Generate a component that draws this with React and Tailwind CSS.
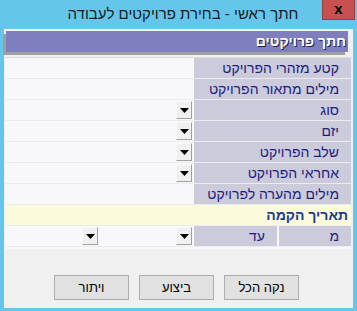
import React from "react";

const rows = [
  { label: "קטע מזהרי הפרויקט", dd: false },
  { label: "מילים מתאור הפרויקט", dd: false },
  { label: "סוג", dd: true },
  { label: "יזם", dd: true },
  { label: "שלב הפרויקט", dd: true },
  { label: "אחראי הפרויקט", dd: true },
  { label: "מילים מהערה לפרויקט", dd: false },
];

const DropBtn = () => (
  <div className="w-[16px] h-[18px] bg-[#f0f0f0] border border-[#f8f8f8] border-r-[#a0a0a0] border-b-[#a0a0a0] flex items-center justify-center">
    <svg width="9" height="5" viewBox="0 0 9 5">
      <path d="M0 0h9L4.5 5z" fill="#000" />
    </svg>
  </div>
);

const Button = ({ children }) => (
  <button className="w-[75px] h-[25px] bg-[#e1e1e1] border border-[#adadad] text-[13px] text-black">
    {children}
  </button>
);

export default function App() {
  return (
    <div
      className="w-[357px] h-[311px] bg-[#64c6ea] flex flex-col overflow-hidden"
      style={{ fontFamily: '"Liberation Sans", "DejaVu Sans", sans-serif' }}
    >
      {/* title bar */}
      <div className="h-[29px] flex items-start">
        <div className="flex-1 pl-[44px] h-[29px] flex items-center justify-center text-[15px] text-[#1a1a1a]" dir="rtl">
          חתך ראשי - בחירת פרויקטים לעבודה
        </div>
        <div className="w-[33px] h-[20px] mr-[2px] bg-[#c75050] border border-[#a33a3a] border-t-0 flex items-center justify-center text-[15px] font-bold text-black leading-none pb-[2px]">
          x
        </div>
      </div>

      {/* client */}
      <div className="mx-[4px] h-[279px] bg-[#f0f0f0] flex flex-col" dir="rtl">
        <div className="mt-[2px] mr-[5px] ml-[2px] h-[21px] bg-[#7f7fbf] shadow-[-3px_3px_0_#a0a0a0] flex items-center px-[2px]">
          <span className="text-[14px] font-bold text-white [text-shadow:1px_1px_0_#202040]">
            חתך פרויקטים
          </span>
        </div>

        <div className="mt-[5px] mr-[2px] ml-[1px] bg-[#f8f8fa] border-t border-[#dcdcdc] flex flex-col">
          {rows.map((r) => (
            <div key={r.label} className="h-[21px] flex border-b border-[#ececf0]">
              <div className="w-[157px] h-[20px] bg-[#cbcbdb] flex items-center pr-[12px] text-[14px] text-[#1e1e80]">
                {r.label}
              </div>
              <div className="w-[2px]" />
              <div className="flex items-center">{r.dd && <DropBtn />}</div>
              <div className="flex-1" />
            </div>
          ))}
          <div className="h-[21px] bg-[#fbfbdc] border-b border-[#ececf0] flex items-center pr-[3px] text-[14px] font-bold text-[#1e3a8a]">
            תאריך הקמה
          </div>
          <div className="h-[21px] flex border-b border-[#ececf0]">
            <div className="w-[72px] h-[20px] bg-[#cbcbdb] flex items-center pr-[12px] text-[14px] text-[#1e1e80]">
              מ
            </div>
            <div className="w-[2px]" />
            <div className="w-[83px] h-[20px] bg-[#cbcbdb] flex items-center pr-[12px] text-[14px] text-[#1e1e80]">
              עד
            </div>
            <div className="w-[2px]" />
            <div className="flex items-center"><DropBtn /></div>
            <div className="w-[78px]" />
            <div className="flex items-center"><DropBtn /></div>
            <div className="flex-1" />
          </div>
          <div className="h-[2px]" />
        </div>

        <div className="flex-1 flex items-end justify-center gap-[10px] pb-[8px] pr-[4px]">
          <Button>נקה הכל</Button>
          <Button>ביצוע</Button>
          <Button>ויתור</Button>
        </div>
      </div>
    </div>
  );
}
